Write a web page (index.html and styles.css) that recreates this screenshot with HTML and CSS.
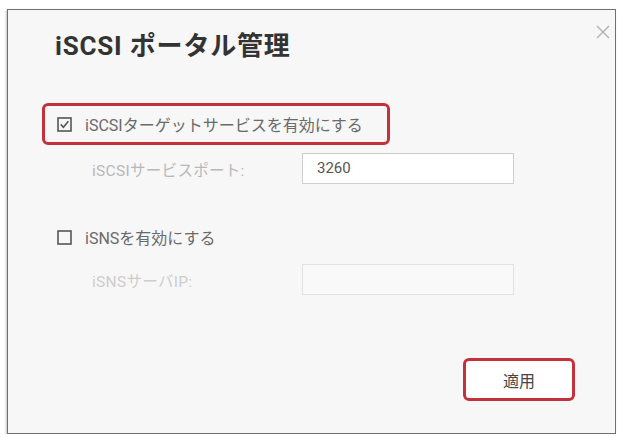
FILE: index.html
```html
<!DOCTYPE html>
<html lang="ja">
<head>
    <meta charset="UTF-8">
    <title>iSCSI ポータル管理</title>
    <link rel="stylesheet" href="styles.css">
</head>
<body>
    <!-- Dialog -->
    <div class="dialog">
        <button class="close" aria-label="閉じる">
            <svg width="14" height="14" viewBox="0 0 14 14">
                <path d="M1 1 L13 13 M13 1 L1 13" stroke="#b0b0b0" stroke-width="1.4" fill="none"/>
            </svg>
        </button>

        <h1 class="title">iSCSI ポータル管理</h1>

        <div class="settings">
            <!-- iSCSI target service -->
            <label class="option highlight">
                <svg class="check" width="15" height="15" viewBox="0 0 15 15">
                    <rect x="1" y="1" width="13" height="13" fill="none" stroke="#555" stroke-width="1.6"/>
                    <path d="M3.8 7.4 L6.4 10.2 L11.4 4.2" fill="none" stroke="#555" stroke-width="1.6"/>
                </svg>
                <span>iSCSIターゲットサービスを有効にする</span>
            </label>
            <div class="field first">
                <span class="field-label">iSCSIサービスポート:</span>
                <div class="input">3260</div>
            </div>

            <!-- iSNS -->
            <label class="option second">
                <svg class="check" width="15" height="15" viewBox="0 0 15 15">
                    <rect x="1" y="1" width="13" height="13" fill="none" stroke="#555" stroke-width="1.6"/>
                </svg>
                <span>iSNSを有効にする</span>
            </label>
            <div class="field disabled">
                <span class="field-label">iSNSサーバIP:</span>
                <div class="input"></div>
            </div>
        </div>

        <div class="actions">
            <button class="apply">適用</button>
        </div>
    </div>
</body>
</html>
```

FILE: styles.css
```css
/* Global */
body {
    margin: 0;
    padding: 0;
    background-color: #fff;
    font-family: Roboto, "Noto Sans CJK JP", sans-serif;
}

/* Dialog */
.dialog {
    position: relative;
    box-sizing: border-box;
    width: 609px;
    height: 425px;
    margin: 9px 0 0 7px;
    padding: 20px 0 0 34px;
    background: #f7f7f7;
    border: 1px solid #707070;
    box-shadow: -1px 1px 2px rgba(0, 0, 0, 0.25);
}
.close {
    position: absolute;
    top: 15px;
    right: 5px;
    padding: 0;
    border: none;
    background: none;
}
.title {
    margin: 0 0 41px 13px;
    font-size: 26px;
    line-height: 32px;
    font-weight: 700;
    letter-spacing: 0.8px;
    color: #333;
}

/* Settings */
.option {
    box-sizing: border-box;
    display: flex;
    align-items: center;
    gap: 13px;
    width: 348px;
    height: 42px;
    padding-left: 12px;
    border: 3px solid transparent;
    border-radius: 6px;
    font-size: 16px;
    color: #6a6a6a;
}
.option.highlight {
    border-color: #c4313b;
}
.option.second {
    margin-top: 32px;
}
.check {
    flex: none;
}
.field {
    display: flex;
    align-items: center;
    margin-top: 6px;
}
.field.first {
    margin-top: 8px;
}
.field-label {
    box-sizing: border-box;
    width: 260px;
    padding-left: 50px;
    font-size: 15.5px;
    letter-spacing: 0.3px;
    color: #b8b8b8;
}
.input {
    box-sizing: border-box;
    width: 212px;
    height: 31px;
    padding-left: 14px;
    line-height: 29px;
    font-size: 15px;
    color: #555;
    background: #fff;
    border: 1px solid #cfcfcf;
}
.field.disabled .field-label {
    color: #cdcdcd;
}
.field.disabled .input {
    background: #f9f9f9;
    border-color: #e2e2e2;
}

/* Footer */
.actions {
    display: flex;
    justify-content: flex-end;
    margin-top: 63px;
    padding-right: 40px;
}
.apply {
    box-sizing: border-box;
    width: 112px;
    height: 43px;
    background: #fff;
    border: 3px solid #c4313b;
    border-radius: 6px;
    font-family: Roboto, "Noto Sans CJK JP", sans-serif;
    font-size: 16px;
    color: #444;
}
```
